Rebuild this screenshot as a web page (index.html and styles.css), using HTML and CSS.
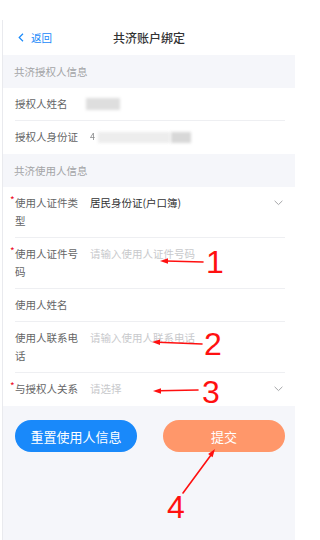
FILE: index.html
```html
<!DOCTYPE html>
<html lang="zh-CN">
<head>
<meta charset="utf-8">
<title>共济账户绑定</title>
<link rel="stylesheet" href="styles.css">
</head>
<body>
<div class="screen">
  <header class="nav">
    <a class="back">
      <svg width="6" height="9" viewBox="0 0 6 9"><polyline points="5,0.8 1.2,4.5 5,8.2" fill="none" stroke="#1989fa" stroke-width="1.2"/></svg>
      <span>返回</span>
    </a>
    <h1 class="nav-title">共济账户绑定</h1>
    <span></span>
  </header>

  <div class="group-title">共济授权人信息</div>
  <div class="cells">
    <div class="cell">
      <div class="cell-body">
        <div class="label">授权人姓名</div>
        <div class="value"><span class="blur blur-name"></span></div>
      </div>
    </div>
    <div class="cell">
      <div class="cell-body last">
        <div class="label">授权人身份证</div>
        <div class="value id"><span class="id-first">4</span><span class="blur blur-id"></span><span class="blur blur-id2"></span></div>
      </div>
    </div>
  </div>

  <div class="group-title">共济使用人信息</div>
  <div class="cells">
    <div class="cell">
      <div class="cell-body">
        <div class="label required">使用人证件类型</div>
        <div class="value">居民身份证(户口簿)</div>
        <svg class="arrow-down" width="9" height="6" viewBox="0 0 9 6"><polyline points="0.6,0.8 4.5,4.6 8.4,0.8" fill="none" stroke="#a5a6a8" stroke-width="1"/></svg>
      </div>
    </div>
    <div class="cell">
      <div class="cell-body">
        <div class="label required">使用人证件号码</div>
        <div class="value placeholder">请输入使用人证件号码</div>
      </div>
    </div>
    <div class="cell">
      <div class="cell-body">
        <div class="label">使用人姓名</div>
        <div class="value"></div>
      </div>
    </div>
    <div class="cell">
      <div class="cell-body">
        <div class="label">使用人联系电话</div>
        <div class="value placeholder">请输入使用人联系电话</div>
      </div>
    </div>
    <div class="cell">
      <div class="cell-body last">
        <div class="label required">与授权人关系</div>
        <div class="value placeholder">请选择</div>
        <svg class="arrow-down" width="9" height="6" viewBox="0 0 9 6"><polyline points="0.6,0.8 4.5,4.6 8.4,0.8" fill="none" stroke="#a5a6a8" stroke-width="1"/></svg>
      </div>
    </div>
  </div>

  <div class="actions">
    <button class="btn btn-primary">重置使用人信息</button>
    <button class="btn btn-warning">提交</button>
  </div>
</div>

<svg class="marks" width="295" height="540" viewBox="0 0 295 540">
  <g stroke="#ff1010" stroke-width="1.6" fill="#ff1010" stroke-linecap="round">
    <line x1="203" y1="262" x2="166" y2="261"/>
    <polygon points="160,261 168,258.3 168,263.7" stroke="none"/>
    <line x1="202" y1="344" x2="158" y2="342.3"/>
    <polygon points="152,342 160,339.5 160,344.9" stroke="none"/>
    <line x1="198" y1="390" x2="159" y2="390.8"/>
    <polygon points="153,391 161,388.3 161,393.7" stroke="none"/>
    <line x1="183" y1="493" x2="211" y2="455"/>
    <polygon points="215,449 212.6,457.3 208.1,454.0" stroke="none"/>
  </g>
  <g class="mark-num">
    <text x="206" y="273">1</text>
    <text x="204" y="355">2</text>
    <text x="202" y="403">3</text>
    <text x="167" y="518">4</text>
  </g>
</svg>
</body>
</html>
```

FILE: styles.css
```css
* {
  box-sizing: border-box;
}

html, body {
  margin: 0;
  padding: 0;
  background: #ffffff;
}

body {
  font-family: "Noto Sans CJK SC", "Noto Sans", sans-serif;
  width: 295px;
  height: 540px;
  overflow: hidden;
  position: relative;
}

.screen {
  margin: 20px 0 0 2px;
  border-left: 1px solid #e9eaee;
  background: #f5f6fa;
  height: 520px;
}

.nav {
  height: 35px;
  background: #ffffff;
  display: grid;
  grid-template-columns: 1fr auto 1fr;
  align-items: center;
  padding: 0 15px;
}

.back {
  display: flex;
  align-items: center;
  gap: 7px;
  color: #1989fa;
  font-size: 10.5px;
}

.nav-title {
  margin: 0;
  font-size: 12px;
  font-weight: 500;
  color: #323233;
}

.group-title {
  height: 33px;
  line-height: 33px;
  padding-left: 11px;
  font-size: 10.5px;
  color: #a3a4a6;
}

.cells {
  background: #ffffff;
}

.cell {
  padding: 0 10px 0 12px;
}

.cell-body {
  display: flex;
  align-items: flex-start;
  padding: 7px 0 7px;
  border-bottom: 1px solid #eeeff2;
  font-size: 10.5px;
  line-height: 18px;
}

.cell-body.last {
  border-bottom: none;
  padding-bottom: 8px;
}

.label {
  position: relative;
  flex: none;
  width: 66px;
  margin-right: 9px;
  color: #646566;
}

.label.required::before {
  content: "*";
  position: absolute;
  left: -5px;
  top: -1px;
  color: #ee0a24;
  font-size: 10px;
  line-height: 14px;
}

.value {
  flex: 1;
  color: #323233;
  min-height: 18px;
}

.value.placeholder {
  color: #c8c9cc;
}

.value.id {
  display: flex;
  align-items: center;
  height: 18px;
}

.id-first {
  color: #8a8b8d;
  font-size: 9px;
  filter: blur(0.6px);
}

.blur {
  display: inline-block;
  background: #dedede;
  filter: blur(1.5px);
}

.blur-name {
  width: 34px;
  height: 12px;
  margin-left: -4px;
  margin-top: 3px;
  vertical-align: top;
}

.blur-id {
  width: 72px;
  height: 11px;
  margin-left: 3px;
  background: #ededed;
}

.blur-id2 {
  width: 20px;
  height: 11px;
  margin-left: 1px;
  background: #d8d8d8;
}

.arrow-down {
  flex: none;
  margin-top: 6px;
  margin-right: 2px;
}

.actions {
  display: flex;
  justify-content: space-between;
  padding: 14px 10px 0 12px;
}

.btn {
  width: 122px;
  height: 32px;
  border: none;
  border-radius: 16px;
  color: #ffffff;
  font-family: "Noto Sans CJK SC", "Noto Sans", sans-serif;
  font-size: 13px;
  padding: 0;
}

.btn-primary {
  background: #1989fa;
}

.btn-warning {
  background: #ff976a;
}

.marks {
  position: absolute;
  top: 0;
  left: 0;
  pointer-events: none;
}

.mark-num text {
  font-family: "Liberation Sans", Arial, sans-serif;
  font-size: 32px;
  fill: #ff1010;
}
```
